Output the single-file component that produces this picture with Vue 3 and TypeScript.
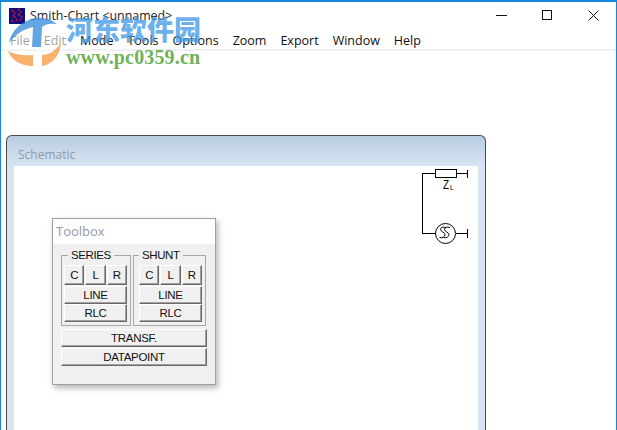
<script setup lang="ts">
const menus = ['File', 'Edit', 'Mode', 'Tools', 'Options', 'Zoom', 'Export', 'Window', 'Help'];

const groups = [
  { title: 'SERIES', parts: ['C', 'L', 'R'] },
  { title: 'SHUNT', parts: ['C', 'L', 'R'] },
];
</script>

<template>
  <div class="app-window">
    <div class="titlebar">
      <svg class="app-icon" width="16" height="16" viewBox="0 0 16 16">
        <rect width="16" height="16" fill="#10107c" />
        <path d="M3 2l3 3-2 3 3 2M9 1l3 3-3 3 4 2-2 4M2 12l3 2M7 11l2 3" stroke="#e01030" stroke-width="1.4" stroke-dasharray="2 1" fill="none" />
      </svg>
      <span class="title-text">Smith-Chart &lt;unnamed&gt;</span>
      <div class="win-controls">
        <svg width="11" height="11" viewBox="0 0 11 11"><path d="M0 5.5h11" stroke="#111" fill="none" /></svg>
        <svg width="11" height="11" viewBox="0 0 11 11"><rect x="0.5" y="0.5" width="9" height="9" stroke="#111" fill="none" /></svg>
        <svg width="11" height="11" viewBox="0 0 11 11"><path d="M0.5 0.5l10 10M10.500 0.5l-10 10" stroke="#111" fill="none" /></svg>
      </div>
    </div>

    <nav class="menubar">
      <span v-for="m in menus" :key="m" class="menu-item">{{ m }}</span>
    </nav>

    <div class="workspace">
      <section class="schematic">
        <div class="schematic-title">Schematic</div>
        <div class="schematic-body">
          <svg class="circuit" width="60" height="80" viewBox="0 0 60 80">
            <g stroke="#000" fill="none" shape-rendering="crispEdges">
              <path d="M0.5 67.500V7.500H13.500M34.500 7.500H45.500M45.500 3.500V12M0.5 67.500H13.500M33.500 67.500H45.500M45.500 63V72" />
              <rect x="13.5" y="3.5" width="21" height="8" />
            </g>
            <g stroke="#000" fill="none">
              <circle cx="23.5" cy="67.5" r="10" />
              <path d="M24 61.500c-3-1-5.500 0-5.500 2s4.500 3 4.500 5-2.500 4-5.500 3M28 61.500c-3-1-5.500 0-5.500 2s4.500 3 4.500 5-2.500 4-5.500 3" />
            </g>
            <text x="21" y="23" class="z-label" textLength="6" lengthAdjust="spacingAndGlyphs">Z</text>
            <text x="28" y="24" class="z-sub">L</text>
          </svg>
        </div>
      </section>

      <section class="toolbox">
        <div class="toolbox-title">Toolbox</div>
        <div class="toolbox-body">
          <div class="groups">
            <fieldset v-for="g in groups" :key="g.title" class="group">
              <legend>{{ g.title }}</legend>
              <div class="part-row">
                <button v-for="p in g.parts" :key="p" class="btn">{{ p }}</button>
              </div>
              <button class="btn wide">LINE</button>
              <button class="btn wide">RLC</button>
            </fieldset>
          </div>
          <button class="btn big">TRANSF.</button>
          <button class="btn big">DATAPOINT</button>
        </div>
      </section>
    </div>

    <!-- watermark sits over the title and menu -->
    <div class="watermark">
      <div class="wm-fade"></div>
      <svg class="wm-logo" width="58" height="56" viewBox="0 0 58 56">
        <path d="M4 28C6 16 16 6 30 3c8-1 16 1 22 6-6-1-12 0-15 3l-1 20h-9l1-20C18 14 10 20 4 28z" fill="#3d8fdc" opacity="0.8" />
        <path d="M3 36c7 4 17 5 25 4v11C14 51 6 44 3 36zM37 40c7 0 13-4 19-12-1 12-8 21-19 23z" fill="#f6a85c" opacity="0.9" />
      </svg>
      <div class="wm-cn">河东软件园</div>
      <div class="wm-url">www.pc0359.cn</div>
    </div>
  </div>
</template>

<style>
html, body {
  margin: 0;
  background: #fff;
  overflow: hidden;
}
</style>

<style scoped>
.app-window {
  position: relative;
  width: 617px;
  height: 430px;
  box-sizing: border-box;
  border: 1px solid #1587de;
  border-bottom: none;
  border-top-width: 2px;
  background: #fff;
  overflow: hidden;
  font-family: "Open Sans", "Noto Sans", sans-serif;
}

.titlebar {
  display: flex;
  align-items: center;
  height: 27px;
  padding-left: 8px;
  color: #222;
}

.app-icon {
  flex: none;
}

.title-text {
  margin-left: 5px;
  font-size: 12.400px;
}

.win-controls {
  display: flex;
  align-items: center;
  gap: 35px;
  margin-left: auto;
  padding-right: 17px;
}

.menubar {
  display: flex;
  box-sizing: border-box;
  height: 22px;
  padding: 3px 0 0 9px;
  gap: 14px;
  align-items: center;
  border-bottom: 2px solid #f0f0f0;
  font-size: 12.500px;
  color: #111;
}

.workspace {
  position: relative;
  flex: 1;
}

.schematic {
  position: absolute;
  left: 5px;
  top: 84px;
  width: 480px;
  height: 320px;
  box-sizing: border-box;
  border: 1px solid #4a4a4a;
  border-bottom: none;
  border-radius: 6px 6px 0 0;
  background: linear-gradient(#b9cde0, #d6e4f3 30px);
  padding: 0 7px;
}

.schematic-title {
  height: 30px;
  line-height: 37px;
  padding-left: 4px;
  font-size: 12px;
  color: #8f9aa6;
}

.schematic-body {
  position: relative;
  height: 280px;
  background: #fff;
}

.circuit {
  position: absolute;
  left: 408px;
  top: 0;
}

.z-label {
  font: 12px "Liberation Sans", sans-serif;
}

.z-sub {
  font: 7px "Liberation Sans", sans-serif;
}

.toolbox {
  position: absolute;
  left: 51px;
  top: 167px;
  width: 164px;
  height: 167px;
  box-sizing: border-box;
  border: 1px solid #a0a0a0;
  background: #f0f0f0;
  box-shadow: 2px 3px 6px rgba(0, 0, 0, 0.3);
}

.toolbox-title {
  height: 25px;
  line-height: 24px;
  padding-left: 3px;
  background: #fff;
  font-size: 13px;
  color: #8f9aa6;
}

.toolbox-body {
  display: flex;
  flex-direction: column;
  padding: 5px 8px 0;
  font-family: "Liberation Sans", Arial, sans-serif;
}

.groups {
  display: grid;
  grid-template-columns: 70px 73px;
  gap: 2px;
  margin-bottom: 3px;
}

.group {
  margin: 0;
  min-width: 0;
  padding: 4px 2px 3px 2px;
  border: 1px solid #a8a8a8;
  box-sizing: border-box;
  height: 77px;
}

.group + .group {
  padding-left: 5px;
}

.group legend {
  padding: 0 3px;
  margin-left: 4px;
  font-size: 11.500px;
  letter-spacing: -0.4px;
  line-height: 12px;
  color: #111;
}

.group + .group legend {
  margin-left: 0;
}

.part-row {
  display: flex;
  width: 63px;
  gap: 1px;
  margin-bottom: 1px;
}

.btn {
  display: block;
  margin: 0;
  padding: 0;
  box-sizing: border-box;
  font: 11.500px "Liberation Sans", Arial, sans-serif;
  letter-spacing: -0.3px;
  color: #111;
  background: #f0f0f0;
  border: 1px solid;
  border-color: #fff #696969 #696969 #fff;
  box-shadow: inset -1px -1px 0 #a0a0a0;
  border-radius: 0;
}

.part-row .btn {
  flex: 1;
  height: 20px;
}

.wide {
  height: 18px;
  width: 63px;
}

.big {
  height: 18px;
  width: 100%;
  margin-bottom: 1px;
}

.watermark {
  position: absolute;
  left: 4px;
  top: 13px;
  width: 220px;
  height: 60px;
  pointer-events: none;
}

.wm-fade {
  position: absolute;
  left: 0;
  top: 15px;
  width: 60px;
  height: 20px;
  background: rgba(255, 255, 255, 0.6);
}

.wm-logo {
  position: absolute;
  left: 0;
  top: 0;
}

.wm-cn {
  position: absolute;
  left: 61px;
  top: -2px;
  font: 900 27px "Noto Sans CJK SC", sans-serif;
  color: rgba(70, 155, 230, 0.8);
  line-height: 32px;
}

.wm-url {
  position: absolute;
  left: 61px;
  top: 32px;
  font: 700 20px "Liberation Serif", serif;
  letter-spacing: 0.15px;
  color: #6fb356;
  line-height: 20px;
}
</style>
